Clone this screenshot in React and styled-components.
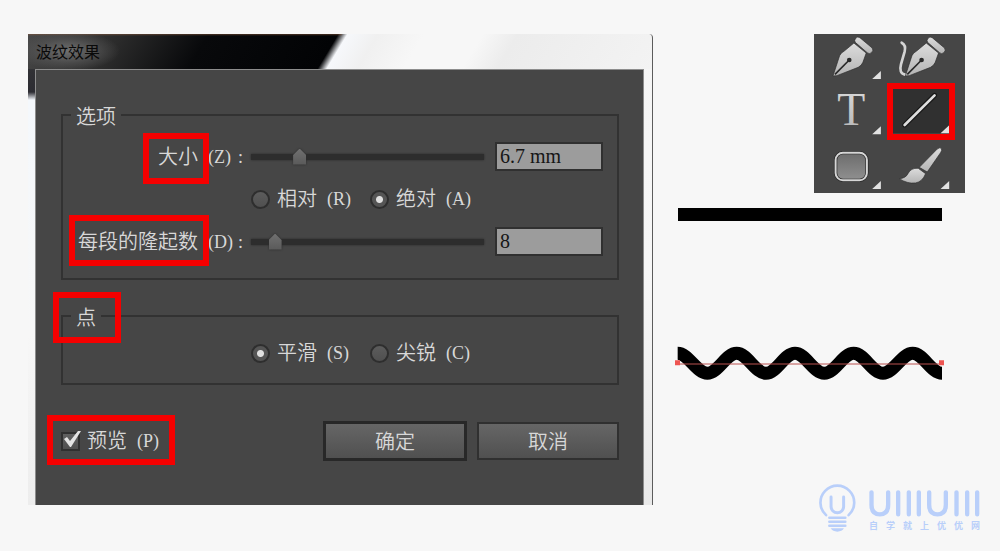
import React, { useState } from "react";
import styled, { createGlobalStyle, css } from "styled-components";

const GlobalStyle = createGlobalStyle`
  *, *::before, *::after { box-sizing: border-box; }
  body {
    margin: 0;
    background: #f7f7f7;
    font-family: "Liberation Serif", "Noto Sans CJK SC", serif;
    font-weight: 350;
    font-size: 20px;
    line-height: 24px;
    color: #d8d8d8;
  }
  button, input { font: inherit; color: inherit; margin: 0; }
`;

const Page = styled.main`
  min-height: 100vh;
  display: grid;
  grid-template-columns: minmax(0, 1fr) 305px;
  column-gap: 22px;
  padding: 34px 20px 16px 28px;
`;

/* Dialog */

const Window = styled.section`
  align-self: start;
  padding: 0 8px 0 7px;
  border-right: 1px solid #5c5c5c;
  border-top-right-radius: 4px;
  background:
    radial-gradient(ellipse 52px 20px at 40px 17px, #707070 0, #5a5a5a88 60%, transparent 100%) 0 0 / 100% 35px no-repeat,
    linear-gradient(#8a5a3c88, transparent) 0 0 / 314px 2px no-repeat,
    linear-gradient(121deg, #484848 0, #2b2b2b 80px, #08090b 155px, #020305 266px, #f6f8fb 274px, #f0f0f0 300px, #f7f7f7 340px, #f7f7f7 390px, #ececec 420px, #f3f3f3 100%) 0 0 / 100% 35px no-repeat,
    linear-gradient(#3a3a3a 0, #2c2c32 58px, #f4f8fc 66px, #f7f7f7 300px, #ededed 100%) 0 0 / 7px 100% no-repeat,
    linear-gradient(#f5f5f5 0, #f7f7f7 50%, #e9e9e9 100%);
`;

const Title = styled.h1`
  margin: 0;
  height: 35px;
  padding-left: 1px;
  font: 400 16px/34px "Noto Sans CJK SC", sans-serif;
  color: #0a0a0a;
`;

const Panel = styled.form`
  padding: 31px 24px 44px 25px;
  background: #464646;
  border: 1px solid #8d8d8d;
  border-bottom: 0;
`;

const Group = styled.fieldset`
  min-width: 0;
  margin: 0 0 22px;
  padding: ${(p) => (p.$compact ? "11px 14px 18px 0" : "13px 14px 22px 0")};
  border: 2px solid #323232;
  display: flex;
  flex-direction: column;
  gap: 16px;
`;

const Legend = styled.legend`
  margin-left: 8px;
  padding: 4px 5px 0;
`;

const markFrame = css`
  content: "";
  position: absolute;
  z-index: 1;
  border: 6px solid #f50000;
  pointer-events: none;
`;

const Marked = styled.span`
  position: relative;
  &::after {
    ${markFrame}
    inset: ${(p) => p.$inset};
  }
`;

const SliderRow = styled.div`
  display: grid;
  grid-template-columns: 180px minmax(0, 1fr) 108px;
  align-items: center;
`;

const FieldLabel = styled.label`
  display: flex;
  justify-content: flex-end;
  gap: 10px;
  white-space: nowrap;
`;

const Key = styled.span`
  display: flex;
  justify-content: space-between;
  width: ${(p) => (p.$wide ? 35 : 24)}px;
  font-size: 18px;
  white-space: nowrap;
`;

const Range = styled.input`
  appearance: none;
  min-width: 0;
  height: 20px;
  margin: 0 11px 0 8px;
  background: linear-gradient(#2d2d2d, #2d2d2d) center / 100% 6px no-repeat;
  filter: drop-shadow(0 0 1px #2a2a2a);
  &::-webkit-slider-thumb {
    appearance: none;
    width: 13px;
    height: 16px;
    background: linear-gradient(#707070, #5a5a5a);
    clip-path: polygon(50% 0, 100% 40%, 100% 100%, 0 100%, 0 40%);
  }
`;

const ValueBox = styled.input`
  width: 100%;
  height: 29px;
  padding: 0 3px;
  border: 2px solid #303030;
  border-radius: 0;
  background: #9c9c9c;
  color: #161616;
`;

const Choices = styled.div`
  display: flex;
  gap: 19px;
  padding-left: 188px;
`;

const Choice = styled.label`
  display: flex;
  align-items: center;
  gap: 10px;
  white-space: nowrap;
`;

const ChoiceName = styled.span`
  display: flex;
  align-items: center;
  gap: 7px;
`;

const Radio = styled.input`
  appearance: none;
  width: 19px;
  height: 19px;
  border: 2px solid #2e2e2e;
  border-radius: 50%;
  background: linear-gradient(#5c5c5c, #505050);
  &:checked {
    background: radial-gradient(circle, #e0e0e0 0 3px, #555 4px);
  }
`;

const Footer = styled.footer`
  display: flex;
  align-items: center;
  gap: 10px;
  padding-top: 14px;
`;

const Preview = styled(Choice)`
  position: relative;
  margin-right: auto;
  &::after {
    ${markFrame}
    inset: -14px -14px -12px -14px;
  }
`;

const CheckWrap = styled.span`
  position: relative;
  display: flex;
  svg {
    position: absolute;
    left: 1px;
    top: -2px;
    display: none;
    pointer-events: none;
  }
  input:checked + svg { display: block; }
`;

const Checkbox = styled.input`
  appearance: none;
  width: 19px;
  height: 19px;
  border: 2px solid #303030;
  background: linear-gradient(#606060, #505050);
`;

const PushButton = styled.button`
  width: ${(p) => (p.$primary ? 144 : 142)}px;
  height: ${(p) => (p.$primary ? 40 : 38)}px;
  padding: 2px 0 0;
  border: ${(p) => (p.$primary ? "3px solid #282828" : "2px solid #303030")};
  background: linear-gradient(#666, #505050);
`;

/* Tools, samples and brand */

const Side = styled.aside`
  display: flex;
  flex-direction: column;
  align-items: flex-start;
`;

const Toolbar = styled.div`
  align-self: flex-end;
  margin-right: 15px;
  width: 151px;
  display: grid;
  grid-template-columns: 1fr 1fr;
  background: #464646;
`;

const ToolButton = styled.button`
  position: relative;
  height: 53px;
  padding: 0;
  border: 0;
  background: none;
  svg { display: block; width: 100%; height: 100%; overflow: visible; }
  ${(p) =>
    p.$active &&
    css`
      &::after {
        ${markFrame}
        inset: -4px 10px 0 -3px;
      }
    `}
`;

const StraightSample = styled.div`
  margin: 15px 0 124px 3px;
  width: 264px;
  height: 13px;
  background: #000;
`;

const Brand = styled.a`
  margin-top: auto;
  align-self: flex-end;
  display: flex;
  gap: 13px;
  color: #b9cffa;
  text-decoration: none;
`;

const BrandName = styled.span`
  width: 111px;
  padding-top: 6px;
  svg { display: block; }
`;

const Tagline = styled.span`
  display: block;
  font: 700 9px/18px "Noto Sans CJK SC", sans-serif;
  text-align: justify;
  text-align-last: justify;
`;

const Corner = ({ x = 228, y = 162 }) => (
  <path d={`M${x - 26} ${y}H${x}V${y - 24}Z`} fill="#e2e2e2" />
);

const Nib = () => (
  <>
    <path d="M84 153 104 92Q107 84 118 78L147 54 184 84 174 112Q170 122 160 127L96 152Z" fill="url(#metal)" stroke="#2c2c2c" strokeWidth="2" />
    <path d="M152 40Q158 33 165 38L202 69Q207 76 200 83 193 89 187 83L151 52Q147 46 152 40Z" fill="url(#metal)" stroke="#2c2c2c" strokeWidth="2" />
    <path d="M90 148 130 108" stroke="#292929" strokeWidth="5" />
    <circle cx="133" cy="105" r="7" fill="#292929" />
  </>
);

const tools = [
  { name: "钢笔工具", box: "27 27 227 159", art: <><Nib /><Corner /></> },
  {
    name: "曲率工具",
    box: "254 27 227 159",
    art: (
      <>
        <path d="M289 53Q303 60 298 80L287 118Q280 145 299 149" fill="none" stroke="#d4d4d4" strokeWidth="8" strokeLinecap="round" />
        <g transform="translate(216 0)"><Nib /></g>
      </>
    ),
  },
  {
    name: "文字工具",
    box: "27 186 227 159",
    art: (
      <>
        <text x="139" y="301" textAnchor="middle" fontFamily="Liberation Serif" fontWeight="400" fontSize="138" fill="url(#metal)">T</text>
        <Corner y={328} />
      </>
    ),
  },
  {
    name: "直线段工具",
    box: "254 186 227 159",
    active: true,
    art: (
      <>
        <path d="M262 190H432V325H262Z" fill="#303030" />
        <path d="M298 300 388 211" stroke="#171717" strokeWidth="15" strokeLinecap="round" />
        <path d="M298 300 388 211" stroke="#dedede" strokeWidth="8" strokeLinecap="round" />
        <Corner x={432} y={325} />
      </>
    ),
  },
  {
    name: "圆角矩形工具",
    box: "27 345 227 159",
    art: (
      <>
        <rect x="92" y="383" width="94" height="83" rx="22" fill="url(#tile)" stroke="#262626" strokeWidth="10" />
        <rect x="92" y="383" width="94" height="83" rx="22" fill="none" stroke="#d6d6d6" strokeWidth="6" />
        <Corner y={492} />
      </>
    ),
  },
  {
    name: "画笔工具",
    box: "254 345 227 159",
    art: (
      <>
        <path d="M342 427 396 372Q405 365 409 371 411 376 406 383L366 441Z" fill="url(#metal)" stroke="#2c2c2c" strokeWidth="2" />
        <path d="M339 430 361 446Q352 470 331 474 306 477 282 461 301 460 308 446 317 428 339 430Z" fill="url(#metal)" stroke="#2c2c2c" strokeWidth="2" />
        <Corner x={432} y={492} />
      </>
    ),
  },
];

const wave = [127, 215, 303, 390, 478, 566, 654, 743, 831].reduce(
  (d, x, i, all) => {
    const from = i ? all[i - 1] : 38;
    const [y0, y1] = i % 2 ? [535, 475] : [475, 535];
    return `${d} C${from + 32} ${y0} ${x - 32} ${y1} ${x} ${y1}`;
  },
  "M38 475"
);

function RadioChoice({ group, value, letter, current, onPick }) {
  return (
    <Choice>
      <ChoiceName>
        <Radio type="radio" name={group} value={value} checked={current === value} onChange={() => onPick(value)} />
        {value}
      </ChoiceName>
      <Key>({letter})</Key>
    </Choice>
  );
}

export default function App() {
  const [size, setSize] = useState("6.7");
  const [ridges, setRidges] = useState("8");
  const [mode, setMode] = useState("绝对");
  const [point, setPoint] = useState("平滑");
  const [preview, setPreview] = useState(true);

  return (
    <>
      <GlobalStyle />
      <Page>
        <Window>
          <Title>波纹效果</Title>
          <Panel onSubmit={(e) => e.preventDefault()}>
            <Group>
              <Legend>选项</Legend>
              <SliderRow>
                <FieldLabel htmlFor="size">
                  <Marked $inset="-12px -11px -15px -15px">大小</Marked>
                  <Key $wide>
                    <span>(Z)</span>
                    <span>:</span>
                  </Key>
                </FieldLabel>
                <Range type="range" aria-label="大小" min="0" max="35" step="0.1" value={size} onChange={(e) => setSize(e.target.value)} />
                <ValueBox id="size" value={`${size} mm`} onChange={(e) => setSize(e.target.value.replace(/[^\d.]/g, ""))} />
              </SliderRow>
              <Choices>
                <RadioChoice group="mode" value="相对" letter="R" current={mode} onPick={setMode} />
                <RadioChoice group="mode" value="绝对" letter="A" current={mode} onPick={setMode} />
              </Choices>
              <SliderRow>
                <FieldLabel htmlFor="ridges">
                  <Marked $inset="-15px -11px -12px -9px">每段的隆起数</Marked>
                  <Key $wide>
                    <span>(D)</span>
                    <span>:</span>
                  </Key>
                </FieldLabel>
                <Range type="range" aria-label="每段的隆起数" min="0" max="100" value={ridges} onChange={(e) => setRidges(e.target.value)} />
                <ValueBox id="ridges" value={ridges} onChange={(e) => setRidges(e.target.value)} />
              </SliderRow>
            </Group>

            <Group $compact>
              <Legend>
                <Marked $inset="-15px -25px -14px -23px">点</Marked>
              </Legend>
              <Choices>
                <RadioChoice group="point" value="平滑" letter="S" current={point} onPick={setPoint} />
                <RadioChoice group="point" value="尖锐" letter="C" current={point} onPick={setPoint} />
              </Choices>
            </Group>

            <Footer>
              <Preview>
                <ChoiceName>
                  <CheckWrap>
                    <Checkbox type="checkbox" checked={preview} onChange={(e) => setPreview(e.target.checked)} />
                    <svg width="20" height="18" viewBox="0 0 20 18">
                      <path d="M2 9 5 7 8 11 16 1H19L9 17H8Z" fill="#e4e4e4" />
                    </svg>
                  </CheckWrap>
                  预览
                </ChoiceName>
                <Key>(P)</Key>
              </Preview>
              <PushButton type="submit" $primary>确定</PushButton>
              <PushButton type="button">取消</PushButton>
            </Footer>
          </Panel>
        </Window>

        <Side>
          <Toolbar role="toolbar">
            {tools.map((t) => (
              <ToolButton key={t.name} type="button" aria-label={t.name} $active={t.active}>
                <svg viewBox={t.box}>
                  <defs>
                    <linearGradient id="metal" x1="0" y1="0" x2="0" y2="1">
                      <stop offset="0" stopColor="#dcdcdc" />
                      <stop offset="1" stopColor="#b4b4b4" />
                    </linearGradient>
                    <linearGradient id="tile" x1="0" y1="0" x2="0" y2="1">
                      <stop offset="0" stopColor="#6c6c6c" />
                      <stop offset="1" stopColor="#909090" />
                    </linearGradient>
                  </defs>
                  {t.art}
                </svg>
              </ToolButton>
            ))}
          </Toolbar>

          <StraightSample />
          <svg width="269" height="37" viewBox="30 450 807 111" aria-hidden="true">
            <path d={wave} fill="none" stroke="#000" strokeWidth="39" />
            <path d="M38 507H830" stroke="#b9504f" strokeWidth="3" />
            <path d="M30 496h15v15h-15ZM822 496h15v15h-15Z" fill="#ee5552" />
          </svg>

          <Brand href="#">
            <svg width="37" height="48" viewBox="27 21 111 145" fill="none" stroke="currentColor" strokeWidth="8" strokeLinecap="round">
              <path d="M48 115A51 51 0 1 1 116 115" />
              <path d="M63 60V89A19 19 0 0 0 101 89V60" strokeWidth="9" />
              <path d="M58 123H106M58 135H106M58 147H106" />
              <path d="M62 155H102Q96 165 82 165 68 165 62 155Z" fill="currentColor" stroke="none" />
            </svg>
            <BrandName>
              <svg width="111" height="27" viewBox="177 38 332 81" fill="none" stroke="currentColor" strokeWidth="13" strokeLinecap="round">
                <path d="M184 45V82Q184 111 209 111T234 82V45M264 45V111M296 45V111M326 45V111M357 45V82Q357 111 382 111T407 82V45M439 45V111M471 45V111M501 45V111" />
              </svg>
              <Tagline>自学就上优优网</Tagline>
            </BrandName>
          </Brand>
        </Side>
      </Page>
    </>
  );
}
